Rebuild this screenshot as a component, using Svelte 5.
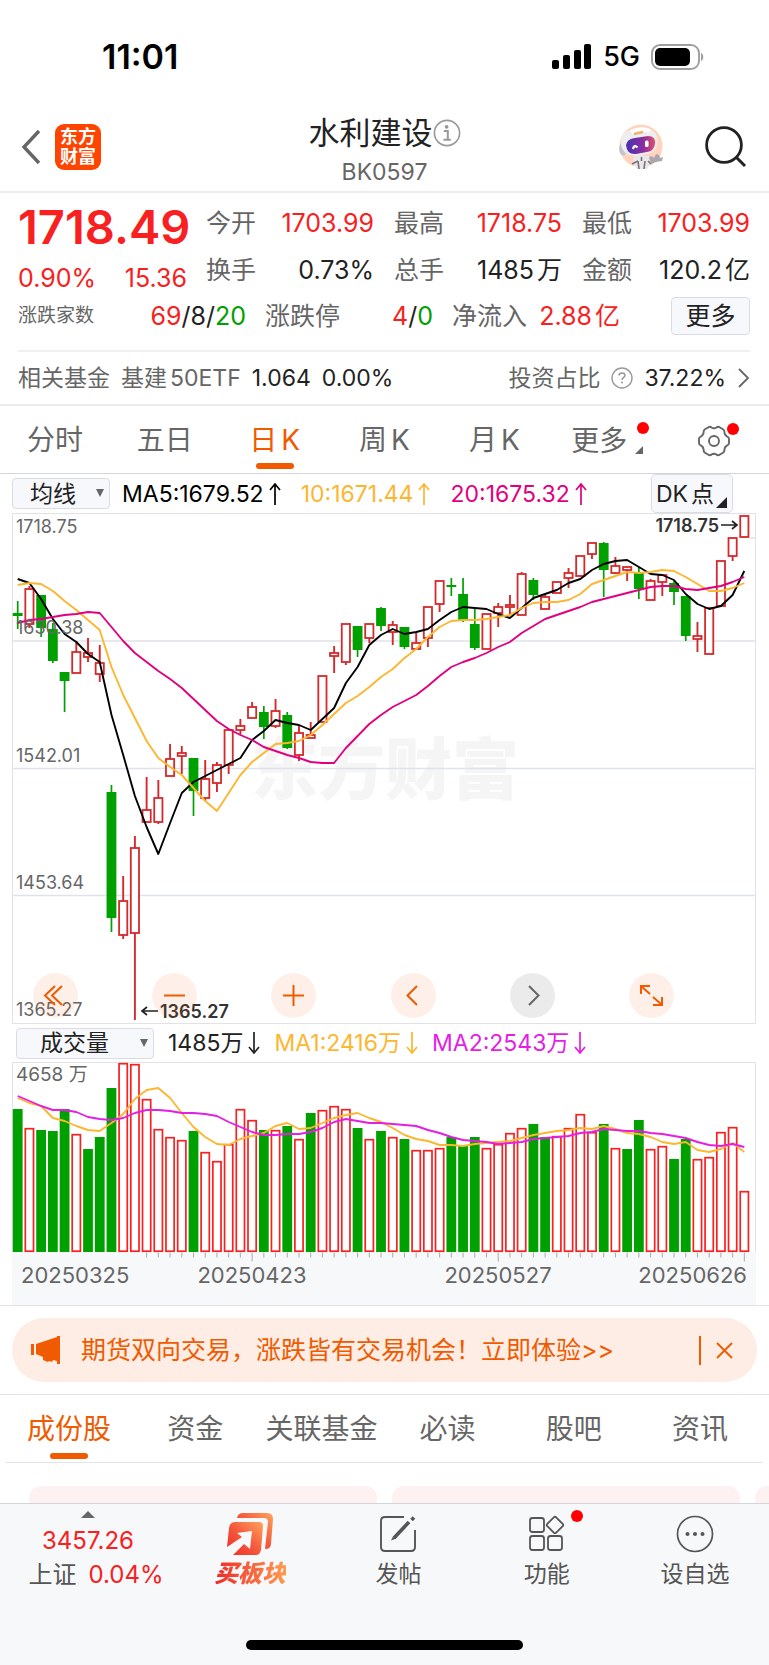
<script lang="ts">
	/**
	 * Sector quote page: headline figures, daily K chart with moving averages,
	 * volume chart, promo strip and the bottom action bar.
	 * Series values are y positions inside each plot, top is 0.
	 */
	type Candle = [string, number, number, number, number];

	// colour, high, body top, body bottom, low
	const candles: Candle[] = [
		['g', 88, 100, 103, 116], ['r', 73, 76, 111, 115], ['g', 82, 82, 115, 124], ['g', 110, 116, 148, 150],
		['g', 159, 159, 168, 199], ['r', 128, 139, 160, 160], ['r', 125, 140, 144, 149], ['r', 132, 150, 161, 169],
		['g', 272, 279, 405, 419], ['r', 363, 388, 422, 426], ['r', 323, 335, 420, 507], ['r', 264, 297, 309, 309],
		['r', 267, 285, 309, 311], ['r', 231, 246, 263, 263], ['r', 233, 240, 243, 261], ['g', 245, 245, 278, 303],
		['r', 247, 266, 285, 288], ['r', 249, 252, 270, 279], ['r', 217, 217, 252, 261], ['r', 206, 213, 217, 222],
		['r', 189, 194, 205, 205], ['g', 193, 199, 214, 226], ['r', 186, 198, 213, 215], ['g', 199, 202, 235, 236],
		['r', 212, 220, 242, 248], ['r', 209, 222, 225, 225], ['r', 163, 163, 209, 209], ['r', 133, 140, 143, 160],
		['r', 111, 111, 149, 152], ['g', 113, 113, 137, 144], ['r', 111, 111, 125, 130], ['g', 94, 95, 113, 118],
		['r', 108, 112, 119, 132], ['g', 114, 114, 134, 136], ['r', 120, 130, 136, 136], ['r', 94, 94, 125, 134],
		['r', 68, 68, 91, 99], ['g', 65, 72, 74, 83], ['g', 65, 81, 108, 109], ['g', 95, 111, 135, 137],
		['r', 101, 101, 136, 136], ['r', 90, 94, 100, 114], ['r', 82, 92, 94, 101], ['r', 59, 61, 102, 102],
		['g', 65, 67, 82, 87], ['r', 81, 84, 96, 96], ['r', 69, 69, 80, 80], ['r', 55, 60, 65, 75],
		['r', 43, 43, 63, 63], ['r', 30, 30, 41, 46], ['g', 29, 30, 57, 84], ['r', 44, 53, 60, 61],
		['r', 54, 54, 57, 68], ['g', 54, 59, 76, 86], ['r', 66, 68, 87, 87], ['r', 62, 62, 69, 83],
		['g', 68, 70, 79, 92], ['g', 83, 83, 123, 128], ['r', 109, 123, 126, 139], ['r', 95, 95, 141, 141],
		['r', 48, 48, 93, 93], ['r', 25, 25, 43, 48], ['r', 3, 3, 24, 24]
	];
	const ma5 = [66, 70, 86, 106, 121, 129, 141, 149, 202, 242, 283, 314, 341, 310, 280, 269, 263, 257, 251, 245, 227, 218, 207, 210, 212, 217, 206, 195, 170, 154, 132, 122, 116, 121, 119, 116, 107, 99, 94, 95, 96, 101, 105, 95, 85, 81, 77, 70, 66, 57, 51, 48, 47, 54, 61, 62, 67, 81, 91, 96, 93, 82, 58];
	const ma10 = [72, 70, 71, 78, 88, 97, 107, 117, 154, 182, 205, 228, 245, 254, 262, 275, 288, 298, 280, 262, 249, 240, 231, 230, 228, 222, 212, 201, 190, 183, 174, 164, 156, 145, 136, 124, 114, 108, 107, 107, 106, 104, 102, 95, 90, 89, 89, 87, 81, 71, 67, 63, 59, 60, 59, 57, 58, 64, 71, 78, 78, 75, 70];
	const ma20 = [110, 107, 106, 104, 102, 101, 99, 100, 114, 128, 140, 149, 158, 166, 175, 186, 197, 208, 216, 222, 227, 234, 238, 242, 245, 249, 250, 250, 235, 223, 211, 202, 194, 188, 182, 173, 163, 154, 149, 145, 140, 134, 129, 120, 113, 106, 102, 98, 94, 89, 86, 83, 80, 77, 74, 73, 73, 76, 77, 75, 73, 69, 64];

	const volumes = [47, 66, 68, 69, 47, 72, 87, 75, 26, 1, 2, 37, 67, 75, 78, 69, 90, 99, 82, 47, 58, 68, 68, 64, 77, 51, 48, 44, 47, 66, 77, 69, 75, 77, 88, 88, 86, 75, 84, 75, 86, 82, 71, 66, 62, 75, 74, 66, 52, 70, 62, 86, 87, 58, 87, 84, 97, 77, 97, 95, 70, 65, 129];
	const falling = new Set([0, 2, 3, 4, 6, 7, 8, 15, 21, 23, 25, 29, 31, 33, 37, 38, 39, 44, 45, 50, 52, 53, 56, 57]);
	const volMa1 = [36, 41, 44, 56, 59, 64, 68, 69, 61, 52, 37, 28, 26, 36, 51, 65, 75, 82, 83, 77, 74, 71, 64, 61, 67, 66, 61, 56, 53, 51, 56, 60, 66, 73, 77, 79, 83, 83, 84, 82, 81, 80, 79, 76, 73, 71, 69, 68, 66, 67, 64, 67, 71, 72, 75, 80, 82, 80, 88, 90, 87, 81, 90];
	const volMa2 = [34, 39, 44, 48, 48, 50, 55, 57, 58, 56, 51, 48, 48, 49, 51, 51, 52, 54, 60, 65, 70, 73, 73, 72, 72, 70, 66, 60, 57, 59, 61, 61, 62, 63, 64, 68, 71, 75, 78, 79, 80, 82, 81, 80, 77, 76, 75, 74, 71, 70, 67, 68, 69, 69, 71, 72, 74, 76, 80, 83, 84, 82, 85];

	const xOf = (i: number) => 5.7 + i * 11.72;
	const line = (ys: number[]) => ys.map((y, i) => `${xOf(i).toFixed(1)},${y}`).join(' ');

	const grid = [
		{ y: 20, label: '1718.75' },
		{ y: 121, label: '1630.38' },
		{ y: 249, label: '1542.01' },
		{ y: 376, label: '1453.64' },
		{ y: 503, label: '1365.27' }
	];

	const stats = [
		{ label: '今开', value: '1703.99', unit: '', up: true },
		{ label: '最高', value: '1718.75', unit: '', up: true },
		{ label: '最低', value: '1703.99', unit: '', up: true },
		{ label: '换手', value: '0.73%', unit: '', up: false },
		{ label: '总手', value: '1485', unit: '万', up: false },
		{ label: '金额', value: '120.2', unit: '亿', up: false }
	];

	const periods = [
		{ name: '分时', k: '' },
		{ name: '五日', k: '' },
		{ name: '日', k: 'K' },
		{ name: '周', k: 'K' },
		{ name: '月', k: 'K' }
	];
	let period = $state(2);

	const sections = ['成份股', '资金', '关联基金', '必读', '股吧', '资讯'];
	let section = $state(0);
</script>

<div class="page">
	<div class="status">
		<span class="clock">11:01</span>
		<div class="signal">
			<svg width="40" height="26" viewBox="0 0 40 26" aria-hidden="true">
				<rect x="0" y="16" width="7" height="9" rx="2" />
				<rect x="11" y="11" width="7" height="14" rx="2" />
				<rect x="22" y="6" width="7" height="19" rx="2" />
				<rect x="32" y="0" width="7" height="25" rx="2" />
			</svg>
			<span>5G</span>
			<svg width="54" height="26" viewBox="0 0 54 26" aria-hidden="true">
				<rect x="1" y="1" width="47" height="24" rx="8" fill="none" stroke="#a0a0a0" stroke-width="2" />
				<rect x="4" y="4" width="35" height="18" rx="5" />
				<path d="M50 9c3 1 3 7 0 8z" fill="#a0a0a0" />
			</svg>
		</div>
	</div>

	<header class="head">
		<div class="head-left">
			<button class="icon" type="button" aria-label="返回">
				<svg width="20" height="36" viewBox="0 0 20 36"><path d="M18 2 3 18l15 16" fill="none" stroke="#666" stroke-width="3.4" /></svg>
			</button>
			<a class="logo" href="#home"><span>东方</span><span>财富</span></a>
		</div>
		<div class="title">
			<h1>
				水利建设
				<svg width="28" height="28" viewBox="0 0 28 28" aria-hidden="true">
					<circle cx="14" cy="14" r="12.6" fill="none" stroke="#999" stroke-width="1.6" />
					<circle cx="13.6" cy="7.8" r="1.9" fill="#999" />
					<path d="M10.8 12h4v8.4M10.4 20.8h7.4" fill="none" stroke="#999" stroke-width="2" />
				</svg>
			</h1>
			<p>BK0597</p>
		</div>
		<div class="head-right">
			<button class="icon" type="button" aria-label="助手">
				<svg width="46" height="48" viewBox="0 0 46 48">
					<defs>
						<linearGradient id="visor" x1="0" y1="0" x2="1" y2="0">
							<stop offset="0" stop-color="#4630b4" />
							<stop offset="0.6" stop-color="#8a2f9f" />
							<stop offset="1" stop-color="#e0506c" />
						</linearGradient>
					</defs>
					<circle cx="23" cy="23" r="21.5" fill="#ffd3be" />
					<path d="M16 33h15l1 7-3 6H19l-4-6z" fill="#e9e7ea" />
					<path d="M14 41l6-3M20 38l1 8M27 38l-1 8M23.500 34v4M30 38l3 3" stroke="#77737a" stroke-width="1.6" />
					<path d="M31 34q3-2 5 1l2-4 3 1 1 3 3-1-1 4-6 1-5 2z" fill="#aaa8ae" />
					<ellipse cx="5" cy="26" rx="4" ry="6.500" fill="#c4c4cb" />
					<path d="M3 19Q2 8 14 7q11-6 21 1 6 5 4 14-2 8-10 9-12 4-20 0-6-4-6-12z" fill="#eeeef1" />
					<path d="M13 9q9-5 19-1" fill="none" stroke="#fff" stroke-width="4" />
					<path d="M16 11l9-2" stroke="#eeb56c" stroke-width="2.4" />
					<path d="M8 22q1-6 9-7l13-2q8 0 7 8-1 7-8 8l-11 2q-9 1-10-9z" fill="url(#visor)" />
					<path d="M15 26q1-5 4.500-1.500" fill="none" stroke="#fff" stroke-width="2.2" />
					<rect x="27" y="17.500" width="3.600" height="6.500" rx="1.600" fill="#fff" />
				</svg>
			</button>
			<button class="icon" type="button" aria-label="搜索">
				<svg width="44" height="44" viewBox="0 0 44 44">
					<circle cx="20" cy="20" r="17.4" fill="none" stroke="#222" stroke-width="2.8" />
					<path d="M32 32l9 9" stroke="#222" stroke-width="3" />
				</svg>
			</button>
		</div>
	</header>

	<section class="quote">
		<div class="quote-top">
			<div class="price">
				<strong>1718.49</strong>
				<div class="change"><span>0.90%</span><span>15.36</span></div>
			</div>
			<dl class="stats">
				{#each stats as s (s.label)}
					<div class="stat">
						<dt>{s.label}</dt>
						<dd class:up={s.up}>{s.value}{#if s.unit}<span class="unit">{s.unit}</span>{/if}</dd>
					</div>
				{/each}
			</dl>
		</div>
		<div class="breadth">
			<div class="stat">
				<span class="small">涨跌家数</span>
				<span><span class="up">69</span>/8/<span class="down">20</span></span>
			</div>
			<div class="stat">
				<span class="label">涨跌停</span>
				<span><span class="up">4</span>/<span class="down">0</span></span>
			</div>
			<div class="stat">
				<span class="label">净流入</span>
				<span class="up">2.88<span class="unit">亿</span></span>
			</div>
			<button class="more" type="button">更多</button>
		</div>
		<a class="fund" href="#fund">
			<span class="label">相关基金</span>
			<span class="label">基建<span class="unit">50ETF</span></span>
			<span>1.064</span>
			<span>0.00%</span>
			<span class="label push">投资占比</span>
			<svg width="22" height="22" viewBox="0 0 22 22" aria-hidden="true">
				<circle cx="11" cy="11" r="10" fill="none" stroke="#999" stroke-width="1.4" />
				<path d="M8 8.6Q8 6 11 6t3 2.6c0 1.8-3 2-3 4.4" fill="none" stroke="#999" stroke-width="1.5" />
				<circle cx="11" cy="15.6" r="1" fill="#999" />
			</svg>
			<span>37.22%</span>
			<svg width="13" height="20" viewBox="0 0 13 20" aria-hidden="true"><path d="M2 1l9 9-9 9" fill="none" stroke="#666" stroke-width="1.8" /></svg>
		</a>
	</section>

	<nav class="periods">
		{#each periods as p, i (p.name)}
			<button type="button" class:active={period === i} onclick={() => (period = i)}>
				{p.name}{#if p.k}<span class="k">{p.k}</span>{/if}
			</button>
		{/each}
		<button type="button" class="drop">
			<span class="has-dot">更多<i class="dot"></i><i class="corner"></i></span>
		</button>
		<button type="button" aria-label="设置">
			<span class="has-dot gear">
				<svg width="34" height="32" viewBox="0 0 34 32">
					<path
						d="M11 2.500q2-1.500 3.500 0 2.500 1.600 5 0 1.500-1.500 3.500 0l3 1.800q1.600 1 1.400 3 .2 3 2.800 4.300 1.800.6 1.800 2.400v4q0 1.800-1.800 2.400-2.600 1.300-2.800 4.300.2 2-1.400 3l-3 1.800q-2 1.500-3.500 0-2.500-1.600-5 0-1.500 1.500-3.500 0l-3-1.800q-1.600-1-1.400-3-.2-3-2.800-4.300Q2 19.800 2 18v-4q0-1.800 1.800-2.400 2.600-1.300 2.800-4.300-.2-2 1.400-3z"
						fill="none"
						stroke="#666"
						stroke-width="1.900"
					/>
					<circle cx="17" cy="16" r="5" fill="none" stroke="#666" stroke-width="1.900" />
				</svg>
				<i class="dot"></i>
			</span>
		</button>
	</nav>

	<div class="legend">
		<label class="pick">
			<select aria-label="主图指标"><option>均线</option></select>
		</label>
		<span class="c-black">MA5:1679.52<svg class="arrow" viewBox="0 0 12 22"><path d="M6 22V1M1 7l5-6 5 6" /></svg></span>
		<span class="c-gold">10:1671.44<svg class="arrow" viewBox="0 0 12 22"><path d="M6 22V1M1 7l5-6 5 6" /></svg></span>
		<span class="c-pink">20:1675.32<svg class="arrow" viewBox="0 0 12 22"><path d="M6 22V1M1 7l5-6 5 6" /></svg></span>
		<button class="dk" type="button">DK<span class="unit">点</span></button>
	</div>

	<div class="chart">
		<svg class="plot" viewBox="0 0 744 511" role="img" aria-label="日K线图">
			<text x="373" y="281" class="watermark">东方财富</text>
			<g stroke="#dfe2ea" stroke-width="1.500">
				<path d="M0 128h744M0 255.500h744M0 382.500h744M738 25h6" />
			</g>
			<rect x="0.500" y="0.500" width="743" height="510" fill="none" stroke="#e2e2e6" />
			{#each candles as [c, high, top, bottom, low], i}
				{@const x = xOf(i)}
				{#if c === 'g'}
					<path d="M{x} {high}V{low}" stroke="#00a000" stroke-width="1.700" />
					<rect x={x - 4.9} y={top} width="9.800" height={bottom - top} fill="#00a000" />
				{:else}
					<path d="M{x} {high}V{top}M{x} {bottom}V{low}" stroke="#d42a2c" stroke-width="1.900" />
					<rect x={x - 4.1} y={top} width="8.200" height={bottom - top} fill="#fff" stroke="#d42a2c" stroke-width="1.800" />
				{/if}
			{/each}
			<polyline points={line(ma5)} class="ma" stroke="#000" />
			<polyline points={line(ma10)} class="ma" stroke="#fdb62f" />
			<polyline points={line(ma20)} class="ma" stroke="#e00080" />
			{#each grid as g (g.label)}
				<text x="4" y={g.y} class="tick">{g.label}</text>
			{/each}
			<text x="707" y="19" class="mark" text-anchor="end">1718.75</text>
			<path d="M709 12h15M720 8l5 4-5 4" fill="none" stroke="#222" stroke-width="1.700" />
			<text x="148" y="505" class="mark">1365.27</text>
			<path d="M146 498h-15M135 494l-5 4 5 4" fill="none" stroke="#222" stroke-width="1.700" />
		</svg>
		<div class="tools">
			<button type="button" aria-label="最早"><svg viewBox="0 0 45 45"><path d="M22 13 12 22.500 22 32M29 13 19 22.500 29 32" /></svg></button>
			<button type="button" aria-label="缩小"><svg viewBox="0 0 45 45"><path d="M12 22.500h21" /></svg></button>
			<button type="button" aria-label="放大"><svg viewBox="0 0 45 45"><path d="M12 22.500h21M22.500 12v21" /></svg></button>
			<button type="button" aria-label="左移"><svg viewBox="0 0 45 45"><path d="M26 13 16.500 22.500 26 32" /></svg></button>
			<button type="button" aria-label="右移" class="off"><svg viewBox="0 0 45 45"><path d="M19 13l9.500 9.500L19 32" /></svg></button>
			<button type="button" aria-label="全屏"><svg viewBox="0 0 45 45"><path d="M12 21v-8h9M13 14l8 7M33 24v8h-9M32 31l-8-7" /></svg></button>
		</div>
	</div>

	<div class="legend vol">
		<label class="pick wide">
			<select aria-label="副图指标"><option>成交量</option></select>
		</label>
		<span>1485万<svg class="arrow" viewBox="0 0 12 22"><path d="M6 0v21M1 15l5 6 5-6" /></svg></span>
		<span class="c-gold">MA1:2416万<svg class="arrow" viewBox="0 0 12 22"><path d="M6 0v21M1 15l5 6 5-6" /></svg></span>
		<span class="c-violet">MA2:2543万<svg class="arrow" viewBox="0 0 12 22"><path d="M6 0v21M1 15l5 6 5-6" /></svg></span>
	</div>

	<div class="chart">
		<svg class="plot" viewBox="0 0 744 243" role="img" aria-label="成交量图">
			<rect x="0" y="190" width="744" height="53" fill="#f7f8fa" />
			<path d="M0.500 190V0.500h743V190" fill="none" stroke="#e2e2e6" />
			{#each volumes as v, i}
				{#if falling.has(i)}
					<rect x={xOf(i) - 4.9} y={v} width="9.800" height={190 - v} fill="#00a000" />
				{:else}
					<rect x={xOf(i) - 4.1} y={v + 0.7} width="8.200" height={188.5 - v} fill="#fff" stroke="#f82020" stroke-width="1.700" />
				{/if}
				{#if i > 10}
					<path d="M{xOf(i)} 190.500v{(i + 1) % 21 === 0 ? 9 : 5}" stroke="#aaa" />
				{/if}
			{/each}
			<polyline points={line(volMa1)} class="ma" stroke="#fdb62f" />
			<polyline points={line(volMa2)} class="ma" stroke="#e41ee4" />
			<text x="4" y="19" class="peak">4658 万</text>
			<text x="9" y="221" class="date">20250325</text>
			<text x="240" y="221" class="date" text-anchor="middle">20250423</text>
			<text x="486" y="221" class="date" text-anchor="middle">20250527</text>
			<text x="735" y="221" class="date" text-anchor="end">20250626</text>
		</svg>
	</div>

	<div class="promo-wrap">
		<div class="promo">
			<svg width="32" height="28" viewBox="0 0 32 28" aria-hidden="true">
				<path d="M0 8h3v11H0zM5 8 26 1V0h3v28h-3v-3l-4-1-1 2-3-1-1 1-5-2v-3l-7-3z" fill="#f05a00" />
			</svg>
			<a href="#promo">期货双向交易，涨跌皆有交易机会！立即体验&gt;&gt;</a>
			<button class="icon" type="button" aria-label="关闭">
				<svg width="17" height="17" viewBox="0 0 17 17"><path d="M1 1l15 15M16 1 1 16" stroke="#f05a00" stroke-width="1.800" /></svg>
			</button>
		</div>
	</div>

	<nav class="sections">
		{#each sections as s, i (s)}
			<button type="button" class:active={section === i} onclick={() => (section = i)}>{s}</button>
		{/each}
	</nav>
	<div class="cards"><div></div><div></div><div></div></div>

	<footer class="bar">
		<div class="actions">
			<a class="index" href="#index">
				<i class="tri"></i>
				<span class="up">3457.26</span>
				<span class="row"><span>上证</span><span class="up">0.04%</span></span>
			</a>
			<a href="#buy">
				<svg width="46" height="46" viewBox="0 0 46 46" aria-hidden="true">
					<defs>
						<linearGradient id="buy" x1="0" y1="1" x2="1" y2="0">
							<stop offset="0" stop-color="#f02828" />
							<stop offset="0.500" stop-color="#f4593c" />
							<stop offset="1" stop-color="#ffa45c" />
						</linearGradient>
					</defs>
					<path d="M10 7q1-5 6-5h24q6 0 6 6l-2 25q0 5-6 5l3-27q0-4-4-4z" fill="url(#buy)" />
					<path d="M8 11h24q4 0 4 4l-2 24q-1 5-5 5H6l11-11 6 5 2-18-15 2 5 4L0 36l2-19q1-6 6-6z" fill="url(#buy)" />
				</svg>
				<span class="buy">买板块</span>
			</a>
			<a href="#post">
				<svg width="46" height="46" viewBox="0 0 46 46" fill="none" stroke="#555" stroke-width="1.900" aria-hidden="true">
					<path d="M29 6H10q-4 0-4 4v26q0 4 4 4h26q4 0 4-4V19" />
					<path d="M19 27 34 11" stroke-width="3.600" />
					<path d="M36.500 9 39 6.500" stroke-width="3.600" />
					<path d="M16 29.500l2-4 2.500 2.200z" fill="#555" stroke="none" />
				</svg>
				<span>发帖</span>
			</a>
			<a href="#tools">
				<span class="has-dot">
					<svg width="46" height="46" viewBox="0 0 46 46" fill="none" stroke="#555" stroke-width="1.800" aria-hidden="true">
						<rect x="6" y="7" width="14" height="14" rx="2.500" />
						<rect x="6" y="25" width="14" height="14" rx="2.500" />
						<rect x="24" y="25" width="14" height="14" rx="2.500" />
						<path d="M29.800 6.400q1.200-1.200 2.400 0l6.500 6.400q1.200 1.200 0 2.400l-6.500 6.400q-1.200 1.200-2.400 0l-6.500-6.400q-1.200-1.200 0-2.400z" />
					</svg>
					<i class="dot"></i>
				</span>
				<span>功能</span>
			</a>
			<a href="#watch">
				<svg width="46" height="46" viewBox="0 0 46 46" aria-hidden="true">
					<circle cx="23" cy="23" r="17.500" fill="none" stroke="#555" stroke-width="1.700" />
					<g fill="#555">
						<circle cx="15.500" cy="23" r="2" />
						<circle cx="23" cy="23" r="2" />
						<circle cx="30.500" cy="23" r="2" />
					</g>
				</svg>
				<span>设自选</span>
			</a>
		</div>
		<div class="home"></div>
	</footer>
</div>

<style>
	:global(body) {
		margin: 0;
		background: #fff;
	}
	.page {
		font-family: Inter, 'Noto Sans CJK SC', sans-serif;
		font-size: 25px;
		line-height: 32px;
		color: #222;
		overflow: hidden;
	}
	button,
	select {
		font: inherit;
		color: inherit;
		border: 0;
		padding: 0;
		background: none;
		cursor: pointer;
	}
	a {
		color: inherit;
		text-decoration: none;
	}
	svg {
		display: block;
	}
	.icon {
		display: block;
	}
	.up {
		color: #f82020;
	}
	.down {
		color: #00a000;
	}
	.label {
		color: #666;
	}
	.unit {
		margin-left: 3px;
	}

	.status {
		display: flex;
		justify-content: space-between;
		align-items: center;
		height: 90px;
		padding: 12px 64px 0 102px;
		color: #000;
	}
	.clock {
		font-size: 34px;
		font-weight: 600;
	}
	.signal {
		display: flex;
		align-items: center;
		gap: 11px;
		font-size: 27px;
		font-weight: 500;
	}

	.head {
		display: grid;
		grid-template-columns: 1fr auto 1fr;
		align-items: center;
		height: 89px;
		padding: 0 21px;
		border-bottom: 2px solid #ececee;
	}
	.head-left,
	.head-right {
		display: flex;
		align-items: center;
		gap: 14px;
	}
	.head-right {
		justify-content: flex-end;
		gap: 40px;
	}
	.logo {
		display: flex;
		flex-direction: column;
		justify-content: center;
		align-items: center;
		width: 46px;
		height: 46px;
		border-radius: 9px;
		background: #ff4400;
		color: #fff;
		font-size: 18px;
		line-height: 20px;
		font-weight: 700;
	}
	.title {
		align-self: end;
		text-align: center;
	}
	.title h1 {
		display: flex;
		align-items: center;
		margin: 0;
		font-size: 31px;
		line-height: 40px;
		font-weight: 400;
	}
	.title p {
		margin: 0;
		font-size: 23px;
		line-height: 38px;
		color: #666;
	}

	.quote {
		padding: 6px 19px 0 18px;
		border-bottom: 2px solid #ececee;
	}
	.quote-top {
		display: flex;
		gap: 16px;
		height: 98px;
	}
	.price {
		width: 172px;
		color: #f82020;
	}
	.price strong {
		display: block;
		font-size: 47px;
		line-height: 56px;
		font-weight: 600;
	}
	.change {
		display: flex;
		justify-content: space-between;
		padding-right: 3px;
		line-height: 46px;
	}
	.stats {
		flex: 1;
		display: grid;
		grid-template-columns: repeat(3, 1fr);
		grid-auto-rows: 47px;
		column-gap: 20px;
		margin: 0;
	}
	.stat {
		display: flex;
		justify-content: space-between;
		align-items: center;
		white-space: nowrap;
	}
	.stat dt {
		color: #666;
	}
	.stat dd {
		margin: 0;
	}
	.breadth {
		display: grid;
		grid-template-columns: 228px 168px 168px 1fr;
		column-gap: 19px;
		height: 38px;
		padding-bottom: 15px;
		border-bottom: 2px solid #f0f0f3;
	}
	.small {
		font-size: 19px;
		color: #666;
	}
	.more {
		justify-self: end;
		width: 79px;
		height: 38px;
		border: 1px solid #dadce4;
		border-radius: 4px;
		background: #f7f8fb;
	}
	.fund {
		display: flex;
		align-items: center;
		gap: 11px;
		height: 52px;
		font-size: 23px;
	}
	.push {
		margin-left: auto;
	}

	.periods {
		display: grid;
		grid-template-columns: repeat(7, 1fr);
		height: 67px;
		border-bottom: 1px solid #d4d5de;
		font-size: 28px;
		color: #666;
	}
	.periods button,
	.sections button {
		position: relative;
	}
	.periods .drop {
		padding-right: 10px;
	}
	.periods .active,
	.sections .active {
		color: #f05a00;
	}
	.periods .active::after,
	.sections .active::after {
		content: '';
		position: absolute;
		left: 50%;
		bottom: 4px;
		width: 38px;
		height: 6px;
		margin-left: -19px;
		border-radius: 3px;
		background: #f05a00;
	}
	.k {
		margin-left: 4px;
	}
	.has-dot {
		position: relative;
		display: inline-block;
		vertical-align: middle;
	}
	.dot {
		position: absolute;
		top: -3px;
		right: -22px;
		width: 12px;
		height: 12px;
		border-radius: 50%;
		background: #ff0000;
	}
	.periods .gear .dot {
		top: -2px;
		right: -8px;
	}
	.corner {
		position: absolute;
		right: -16px;
		bottom: 3px;
		border-left: 8px solid transparent;
		border-bottom: 8px solid #666;
	}

	.legend {
		display: flex;
		align-items: center;
		gap: 12px;
		height: 39px;
		padding: 0 12px;
		font-size: 23px;
		white-space: nowrap;
	}
	.legend > span {
		display: flex;
		align-items: center;
		margin-right: 8px;
	}
	.legend.vol {
		gap: 14px;
		height: 38px;
		padding-left: 16px;
	}
	.legend.vol > span {
		margin-right: 0;
	}
	.pick {
		position: relative;
		width: 98px;
	}
	.pick.wide {
		width: 138px;
	}
	.pick::after {
		content: '';
		position: absolute;
		right: 6px;
		top: 11px;
		border: 4px solid transparent;
		border-top: 8px solid #666;
		border-bottom: 0;
	}
	.pick select {
		display: block;
		appearance: none;
		width: 100%;
		height: 31px;
		padding: 0 0 0 17px;
		border: 1px solid #dadce4;
		border-radius: 4px;
		background: #f7f8fb;
		line-height: 28px;
	}
	.pick.wide select {
		padding-left: 23px;
	}
	.arrow {
		width: 12px;
		height: 22px;
		margin-left: 5px;
		fill: none;
		stroke: currentColor;
		stroke-width: 1.7;
	}
	.c-black {
		color: #000;
	}
	.c-gold {
		color: #fdb62f;
	}
	.c-pink {
		color: #e00080;
	}
	.c-violet {
		color: #e41ee4;
	}
	.dk {
		position: relative;
		width: 82px;
		height: 39px;
		margin-left: auto;
		margin-right: 24px;
		padding-right: 14px;
		border: 1px solid #dadce4;
		border-radius: 5px;
		background: #f7f8fb;
	}
	.dk::after {
		content: '';
		position: absolute;
		right: 5px;
		bottom: 4px;
		border-left: 11px solid transparent;
		border-bottom: 11px solid #222;
	}

	.chart {
		position: relative;
		padding: 0 13px 0 12px;
	}
	.plot {
		width: 100%;
		height: auto;
	}
	.ma {
		fill: none;
		stroke-width: 1.9;
		stroke-linejoin: round;
	}
	.watermark {
		font-size: 67px;
		font-weight: 900;
		fill: #f5f5f5;
		text-anchor: middle;
	}
	.tick {
		font-size: 18px;
		fill: #666;
	}
	.mark {
		font-size: 18px;
		font-weight: 600;
		fill: #333;
	}
	.peak {
		font-size: 19px;
		fill: #666;
	}
	.date {
		font-size: 22px;
		fill: #666;
	}
	.tools {
		position: absolute;
		left: 33px;
		right: 95px;
		bottom: 6px;
		display: flex;
		justify-content: space-between;
	}
	.tools button {
		width: 45px;
		height: 45px;
		border-radius: 50%;
		background: rgba(250, 110, 30, 0.1);
	}
	.tools path {
		fill: none;
		stroke: #f05a00;
		stroke-width: 2;
	}
	.tools .off {
		background: #ebebeb;
	}
	.tools .off path {
		stroke: #666;
	}

	.promo-wrap {
		padding: 12px;
		border-top: 1px solid #e2e3e8;
		border-bottom: 1px solid #e2e3e8;
	}
	.promo {
		display: flex;
		align-items: center;
		gap: 18px;
		height: 64px;
		padding: 0 24px 0 19px;
		border-radius: 32px;
		background: #feede4;
		color: #f05a00;
		white-space: nowrap;
	}
	.promo button {
		margin-left: auto;
		padding: 6px 0 6px 15px;
		border-left: 2px solid #f05a00;
	}

	.sections {
		display: grid;
		grid-template-columns: repeat(6, 1fr);
		height: 67px;
		margin: 0 6px;
		border-bottom: 1px solid #e2e3e8;
		font-size: 28px;
		color: #666;
		white-space: nowrap;
	}
	.sections .active::after {
		bottom: 3px;
	}
	.cards {
		display: flex;
		gap: 15px;
		height: 17px;
		padding: 23px 0 0 29px;
		overflow: hidden;
	}
	.cards div {
		flex: 0 0 47%;
		height: 40px;
		border-radius: 12px;
		background: #fef1f2;
	}

	.bar {
		border-top: 1px solid #d4d5da;
		background: #f7f8fa;
		padding: 7px 0 16px;
	}
	.actions {
		display: grid;
		grid-template-columns: 176px repeat(4, 1fr);
	}
	.actions a {
		display: flex;
		flex-direction: column;
		align-items: center;
		font-size: 23px;
		line-height: 34px;
		color: #555;
		white-space: nowrap;
	}
	.actions .index {
		font-size: 24px;
	}
	.row {
		display: flex;
		gap: 12px;
		padding-left: 16px;
	}
	.tri {
		margin-bottom: 6px;
		border: 7px solid transparent;
		border-bottom: 7px solid #666;
		border-top: 0;
	}
	.actions .up {
		color: #f82020;
	}
	.actions .dot {
		top: -1px;
		right: -13px;
	}
	.actions .buy {
		font-size: 24px;
		font-weight: 900;
		font-style: italic;
		background: linear-gradient(90deg, #f02828, #ff9a50);
		background-clip: text;
		color: transparent;
	}
	.home {
		width: 36%;
		height: 10px;
		margin: 48px auto 0;
		border-radius: 5px;
		background: #000;
	}
</style>
